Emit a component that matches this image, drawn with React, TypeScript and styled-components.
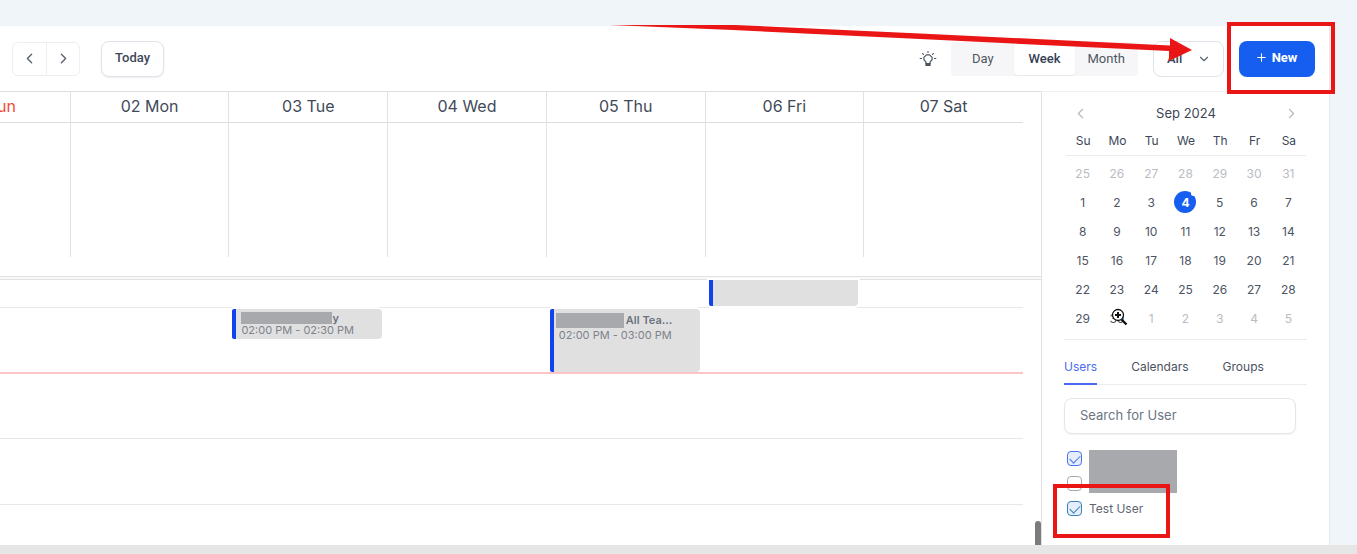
import React from "react";
import styled, { createGlobalStyle, css } from "styled-components";
import { ChevronDown, ChevronLeft, ChevronRight, Plus } from "lucide-react";

const GlobalStyle = createGlobalStyle`
  * { box-sizing: border-box; }
  body { margin: 0; background: #eff5f8; font-family: Inter, "Liberation Sans", sans-serif; color: #3d4757; }
  button, input, select { font: inherit; color: inherit; margin: 0; }
`;

const Page = styled.div`
  min-height: 100vh;
  display: flex;
  flex-direction: column;
  padding-top: 26px;
  overflow: hidden;
`;

const Card = styled.main`
  flex: 1;
  display: flex;
  flex-direction: column;
  margin-right: 27px;
  background: #fff;
  border-right: 1px solid #e4e9ee;
`;

const BottomStrip = styled.footer`
  height: 9px;
  background: #e6e6e6;
`;

const Toolbar = styled.header`
  position: relative;
  display: flex;
  align-items: center;
  height: 65px;
  padding: 0 14px 0 12px;
  font-family: Roboto, "Liberation Sans", sans-serif;
  font-size: 13px;
`;

const PagerGroup = styled.div`
  display: flex;
  height: 34px;
  margin-right: 21px;
  border: 1px solid #efeff2;
  border-radius: 6px;
`;

const PagerButton = styled.button`
  display: grid;
  place-items: center;
  width: 33px;
  padding: 0;
  border: 0;
  background: none;
  color: #5b6472;
  & + & { border-left: 1px solid #efeff2; }
`;

const TodayButton = styled.button`
  width: 63px;
  height: 36px;
  padding: 0 0 2px;
  border: 1px solid #e2e2ea;
  border-radius: 8px;
  background: #fff;
  box-shadow: 0 1px 2px rgba(16, 24, 40, 0.08);
  font-weight: 500;
`;

const Spacer = styled.div`
  flex: 1;
`;

const HintButton = styled.button`
  display: grid;
  place-items: center;
  width: 20px;
  height: 20px;
  margin-right: 13px;
  padding: 0;
  border: 0;
  background: none;
  color: #4b5563;
`;

const Segments = styled.div`
  display: flex;
  width: 187px;
  height: 34px;
  margin-right: 15px;
  padding: 1px;
  border-radius: 4px;
  background: #f6f6f8;
`;

const Segment = styled.button<{ $active?: boolean }>`
  flex: 1;
  padding: 0;
  border: 0;
  border-radius: 4px;
  background: ${(p) => (p.$active ? "#fff" : "none")};
  box-shadow: ${(p) => (p.$active ? "0 1px 2px rgba(16, 24, 40, 0.06)" : "none")};
  font-weight: ${(p) => (p.$active ? 500 : 400)};
  color: ${(p) => (p.$active ? "#344054" : "#4f5662")};
`;

const FilterBox = styled.div`
  display: grid;
  grid-template-columns: 1fr;
  align-items: center;
  width: 71px;
  height: 36px;
  margin-right: 15px;
  & > * { grid-area: 1 / 1; }
  svg { justify-self: end; margin-right: 13px; pointer-events: none; }
`;

const FilterSelect = styled.select`
  appearance: none;
  width: 100%;
  height: 100%;
  padding: 0 13px;
  border: 1px solid #e2e2ea;
  border-radius: 8px;
  background: #fff;
  font-weight: 500;
`;

const redFrame = css`
  content: "";
  position: absolute;
  border: 4px solid #ea1515;
  pointer-events: none;
`;

const NewHighlight = styled.div`
  position: relative;
  &::after { ${redFrame} inset: -19px -20px -17px -12px; }
`;

const NewButton = styled.button`
  display: flex;
  align-items: center;
  justify-content: center;
  gap: 4px;
  width: 76px;
  height: 36px;
  padding: 0 2px 2px 0;
  border: 0;
  border-radius: 8px;
  background: #155eef;
  color: #fff;
  font-weight: 700;
`;

const Arrow = styled.svg`
  position: absolute;
  top: -1px;
  right: 137px;
  width: 582px;
  height: 38px;
  pointer-events: none;
`;

const Content = styled.div`
  flex: 1;
  display: flex;
`;

const WeekView = styled.section`
  flex: 1;
  min-width: 0;
  display: flex;
  flex-direction: column;
  overflow: hidden;
  border-top: 1px solid #dedede;
`;

const weekColumns = css`
  display: grid;
  grid-template-columns: repeat(7, minmax(0, 1fr));
  margin-left: -88px;
`;

const DayHeader = styled.div`
  ${weekColumns}
  margin-right: 18px;
  border-bottom: 1px solid #dedede;
`;

const DayName = styled.div<{ $today?: boolean }>`
  height: 30px;
  border-right: 1px solid #e2e2e2;
  font-size: 16px;
  line-height: 29px;
  text-align: center;
  color: ${(p) => (p.$today ? "#f04a38" : "#3f4a59")};
  &:last-child { border-right: 0; }
`;

const AllDay = styled.div`
  ${weekColumns}
  height: 134px;
  margin-right: 18px;
  margin-bottom: 19px;
`;

const AllDayCell = styled.div`
  border-right: 1px solid #e2e2e2;
  &:last-child { border-right: 0; }
`;

const Divider = styled.div`
  height: 4px;
  border: solid #e2e2e2;
  border-width: 1px 0;
  background: #f8f8f8;
`;

const Scroller = styled.div`
  flex: 1;
  display: flex;
`;

const Timeline = styled.div`
  ${weekColumns}
  flex: 1;
  grid-template-rows: 28px 66px 65px 66px minmax(40px, 1fr);
`;

const HourLine = styled.div<{ $row: number; $now?: boolean }>`
  grid-column: 1 / -1;
  grid-row: ${(p) => p.$row};
  z-index: ${(p) => (p.$now ? 1 : "auto")};
  border-bottom: ${(p) => (p.$now ? "2px solid #fcc4c4" : "1px solid #e8e8e8")};
`;

const Event = styled.article<{ $day: number; $row: number; $size: "tail" | "half" | "full" }>`
  grid-column: ${(p) => p.$day};
  grid-row: ${(p) => p.$row};
  height: ${(p) => ({ tail: 26, half: 30, full: 63 })[p.$size]}px;
  margin: ${(p) => (p.$size === "tail" ? 0 : 1)}px 6px 0 3px;
  padding: 3px 0 0 5px;
  border-left: 4px solid #1043ee;
  border-radius: ${(p) => (p.$size === "tail" ? "0 0 4px 2px" : "2px 4px 4px 2px")};
  background: #e0e0e0;
  box-shadow: 0 0 0 2px #fff;
  color: #7d828b;
  font-size: 11px;
  line-height: 14px;
`;

const EventTitle = styled.div<{ $tall?: boolean }>`
  display: flex;
  align-items: center;
  gap: ${(p) => (p.$tall ? 2 : 0)}px;
  margin-left: ${(p) => (p.$tall ? -3 : 0)}px;
  height: ${(p) => (p.$tall ? 16 : 11)}px;
  font-weight: 600;
  color: #6b7280;
`;

const Mask = styled.span<{ $w: number; $h: number }>`
  width: ${(p) => p.$w}px;
  height: ${(p) => p.$h}px;
  background: #a8a9ac;
`;

const Gutter = styled.div`
  display: flex;
  align-items: flex-end;
  justify-content: flex-end;
  width: 18px;
`;

const Thumb = styled.div`
  width: 6px;
  height: 24px;
  border-radius: 3px 3px 0 0;
  background: #7b7b7b;
`;

const Sidebar = styled.aside`
  width: 288px;
  padding: 11px 22px 0;
  border-left: 1px solid #e2e2e2;
  border-top: 1px solid #f0f0f2;
`;

const MonthBar = styled.div`
  display: flex;
  align-items: center;
  justify-content: space-between;
  height: 20px;
  padding: 0 7px 0 8px;
  font-size: 13px;
`;

const MonthButton = styled.button`
  display: grid;
  padding: 0;
  border: 0;
  background: none;
  color: #b5b8bd;
`;

const MonthTable = styled.table`
  width: 240px;
  margin: 5px 0 0 2px;
  border-spacing: 0;
  table-layout: fixed;
  font-size: 12px;
  text-align: center;
  th { height: 28px; padding: 0 0 2px; border-bottom: 1px solid #ececef; font-weight: 400; }
  td { height: 29px; padding: 0 1px 1px 0; }
  tbody::before { content: ""; display: block; height: 3px; }
`;

const DateCell = styled.td<{ $muted: boolean }>`
  color: ${(p) => (p.$muted ? "#b9bcc2" : "#4d5464")};
`;

const DateMark = styled.span<{ $selected: boolean }>`
  position: relative;
  display: inline-grid;
  place-items: center;
  width: 22px;
  height: 22px;
  border-radius: 50%;
  ${(p) =>
    p.$selected &&
    css`
      background: #155eef;
      color: #fff;
      font-weight: 700;
      &::after {
        content: "";
        position: absolute;
        top: 0;
        right: 0;
        width: 5px;
        height: 5px;
        border-radius: 50%;
        background: #fff;
      }
    `}
`;

const ZoomCursor = styled.svg`
  position: absolute;
  top: 1px;
  left: 5px;
  width: 17px;
  height: 18px;
`;

const Tabs = styled.nav`
  display: flex;
  gap: 34px;
  margin-top: 6px;
  padding-top: 14px;
  border-top: 1px solid #ececf0;
  border-bottom: 1px solid #ececf0;
  font-size: 12px;
`;

const Tab = styled.button<{ $active?: boolean }>`
  height: 31px;
  margin-bottom: -1px;
  padding: 0 0 5px;
  border: 0;
  border-bottom: 2px solid ${(p) => (p.$active ? "#4a6cf2" : "transparent")};
  background: none;
  color: ${(p) => (p.$active ? "#4a6cf2" : "#4b5160")};
`;

const Search = styled.input`
  display: block;
  width: calc(100% - 11px);
  height: 36px;
  margin: 13px 0 12px;
  padding: 0 15px 2px;
  border: 1px solid #e5e5ea;
  border-radius: 8px;
  box-shadow: 0 1px 2px rgba(16, 24, 40, 0.06);
  font-size: 13px;
  &::placeholder { color: #6c7583; opacity: 1; }
`;

const UserList = styled.div`
  position: relative;
  display: flex;
  flex-direction: column;
  align-items: flex-start;
  padding-left: 3px;
`;

const UserRow = styled.label<{ $framed?: boolean }>`
  position: relative;
  display: flex;
  align-items: center;
  gap: 7px;
  height: 25px;
  font-size: 12px;
  color: #5f6673;
  ${(p) => p.$framed && css`&::after { ${redFrame} inset: -12px -27px -17px -14px; }`}
`;

const Check = styled.input<{ $tone: string }>`
  appearance: none;
  display: grid;
  place-items: center;
  width: 15px;
  height: 15px;
  border: 1px solid ${(p) => p.$tone};
  border-radius: 4px;
  background: #fff;
  &:checked { background: #e6eefc; }
  &:checked::after {
    content: "";
    width: 9px;
    height: 5px;
    margin-top: -2px;
    border: solid ${(p) => p.$tone};
    border-width: 0 0 1px 1px;
    transform: rotate(-45deg);
  }
`;

const UserMask = styled.div`
  position: absolute;
  top: 4px;
  left: 25px;
  width: 88px;
  height: 43px;
  background: #a8a9ac;
`;

const dayNames = ["01 Sun", "02 Mon", "03 Tue", "04 Wed", "05 Thu", "06 Fri", "07 Sat"];
const weekdays = ["Su", "Mo", "Tu", "We", "Th", "Fr", "Sa"];
const monthRows = [
  [25, 26, 27, 28, 29, 30, 31],
  [1, 2, 3, 4, 5, 6, 7],
  [8, 9, 10, 11, 12, 13, 14],
  [15, 16, 17, 18, 19, 20, 21],
  [22, 23, 24, 25, 26, 27, 28],
  [29, 30, 1, 2, 3, 4, 5],
];

const Bulb = () => (
  <svg width="18" height="18" viewBox="0 0 18 18" fill="none" stroke="currentColor" strokeWidth="1.2" strokeLinecap="round">
    <path d="M7 13.500v-1.300L4.900 9.600V7.400L7.400 4.900h3.200l2.500 2.500v2.200L11 12.200v1.300z" strokeLinejoin="round" />
    <path d="M7 13.500h4v2H7z" fill="currentColor" />
    <path d="M9 1.500v1M3.600 3.600l.8.8M14.400 3.600l-.8.8M1.200 8.500h1.300M15.500 8.500h1.300" />
  </svg>
);

const MagnifierCursor = () => (
  <ZoomCursor viewBox="0 0 17 18" fill="none">
    <path d="M10.500 11.500l5 5" stroke="#111" strokeWidth="2.400" />
    <circle cx="7" cy="7" r="5.500" fill="#fff" stroke="#111" strokeWidth="1.300" />
    <path d="M7 4v6M4 7h6" stroke="#111" strokeWidth="2" />
  </ZoomCursor>
);

const MiniMonth = () => (
  <>
    <MonthBar>
      <MonthButton aria-label="Previous month"><ChevronLeft size={17} strokeWidth={1.5} /></MonthButton>
      <span>Sep 2024</span>
      <MonthButton aria-label="Next month"><ChevronRight size={17} strokeWidth={1.5} /></MonthButton>
    </MonthBar>
    <MonthTable>
      <thead>
        <tr>{weekdays.map((d) => <th key={d} scope="col">{d}</th>)}</tr>
      </thead>
      <tbody>
        {monthRows.map((row, r) => (
          <tr key={r}>
            {row.map((n) => (
              <DateCell key={n} $muted={(r === 0 && n > 7) || (r === 5 && n < 10)}>
                <DateMark $selected={r === 1 && n === 4}>
                  {n}
                  {r === 5 && n === 30 && <MagnifierCursor />}
                </DateMark>
              </DateCell>
            ))}
          </tr>
        ))}
      </tbody>
    </MonthTable>
  </>
);

export default function App() {
  return (
    <>
      <GlobalStyle />
      <Page>
        <Card>
          <Toolbar>
            <PagerGroup>
              <PagerButton aria-label="Previous week"><ChevronLeft size={17} /></PagerButton>
              <PagerButton aria-label="Next week"><ChevronRight size={17} /></PagerButton>
            </PagerGroup>
            <TodayButton>Today</TodayButton>
            <Spacer />
            <HintButton aria-label="Tips"><Bulb /></HintButton>
            <Segments>
              <Segment>Day</Segment>
              <Segment $active>Week</Segment>
              <Segment>Month</Segment>
            </Segments>
            <FilterBox>
              <FilterSelect aria-label="Filter"><option>All</option></FilterSelect>
              <ChevronDown size={14} color="#5b6472" />
            </FilterBox>
            <NewHighlight>
              <NewButton><Plus size={13} />New</NewButton>
            </NewHighlight>
            <Arrow viewBox="0 0 582 38" fill="#ea1515">
              <path d="M0 0H125L310 8.500L560 20.500V13L582 25L559 36V26L310 14L123 5Z" />
            </Arrow>
          </Toolbar>
          <Content>
            <WeekView>
              <DayHeader>
                {dayNames.map((d, i) => <DayName key={d} $today={i === 0}>{d}</DayName>)}
              </DayHeader>
              <AllDay>
                {dayNames.map((d) => <AllDayCell key={d} />)}
              </AllDay>
              <Divider />
              <Scroller>
                <Timeline>
                  <HourLine $row={1} />
                  <HourLine $row={2} $now />
                  <HourLine $row={3} />
                  <HourLine $row={4} />
                  <Event $day={6} $row={1} $size="tail" />
                  <Event $day={3} $row={2} $size="half">
                    <EventTitle><Mask $w={91} $h={12} />y</EventTitle>
                    02:00 PM - 02:30 PM
                  </Event>
                  <Event $day={5} $row={2} $size="full">
                    <EventTitle $tall><Mask $w={68} $h={15} />All Tea...</EventTitle>
                    02:00 PM - 03:00 PM
                  </Event>
                </Timeline>
                <Gutter><Thumb /></Gutter>
              </Scroller>
            </WeekView>
            <Sidebar>
              <MiniMonth />
              <Tabs>
                <Tab $active>Users</Tab>
                <Tab>Calendars</Tab>
                <Tab>Groups</Tab>
              </Tabs>
              <Search aria-label="Search for User" placeholder="Search for User" />
              <UserList>
                <UserRow><Check type="checkbox" defaultChecked $tone="#4775ee" aria-label="First user" /></UserRow>
                <UserRow><Check type="checkbox" $tone="#a9a9ad" aria-label="Second user" /></UserRow>
                <UserMask />
                <UserRow $framed>
                  <Check type="checkbox" defaultChecked $tone="#3b82b5" />
                  Test User
                </UserRow>
              </UserList>
            </Sidebar>
          </Content>
        </Card>
        <BottomStrip />
      </Page>
    </>
  );
}
